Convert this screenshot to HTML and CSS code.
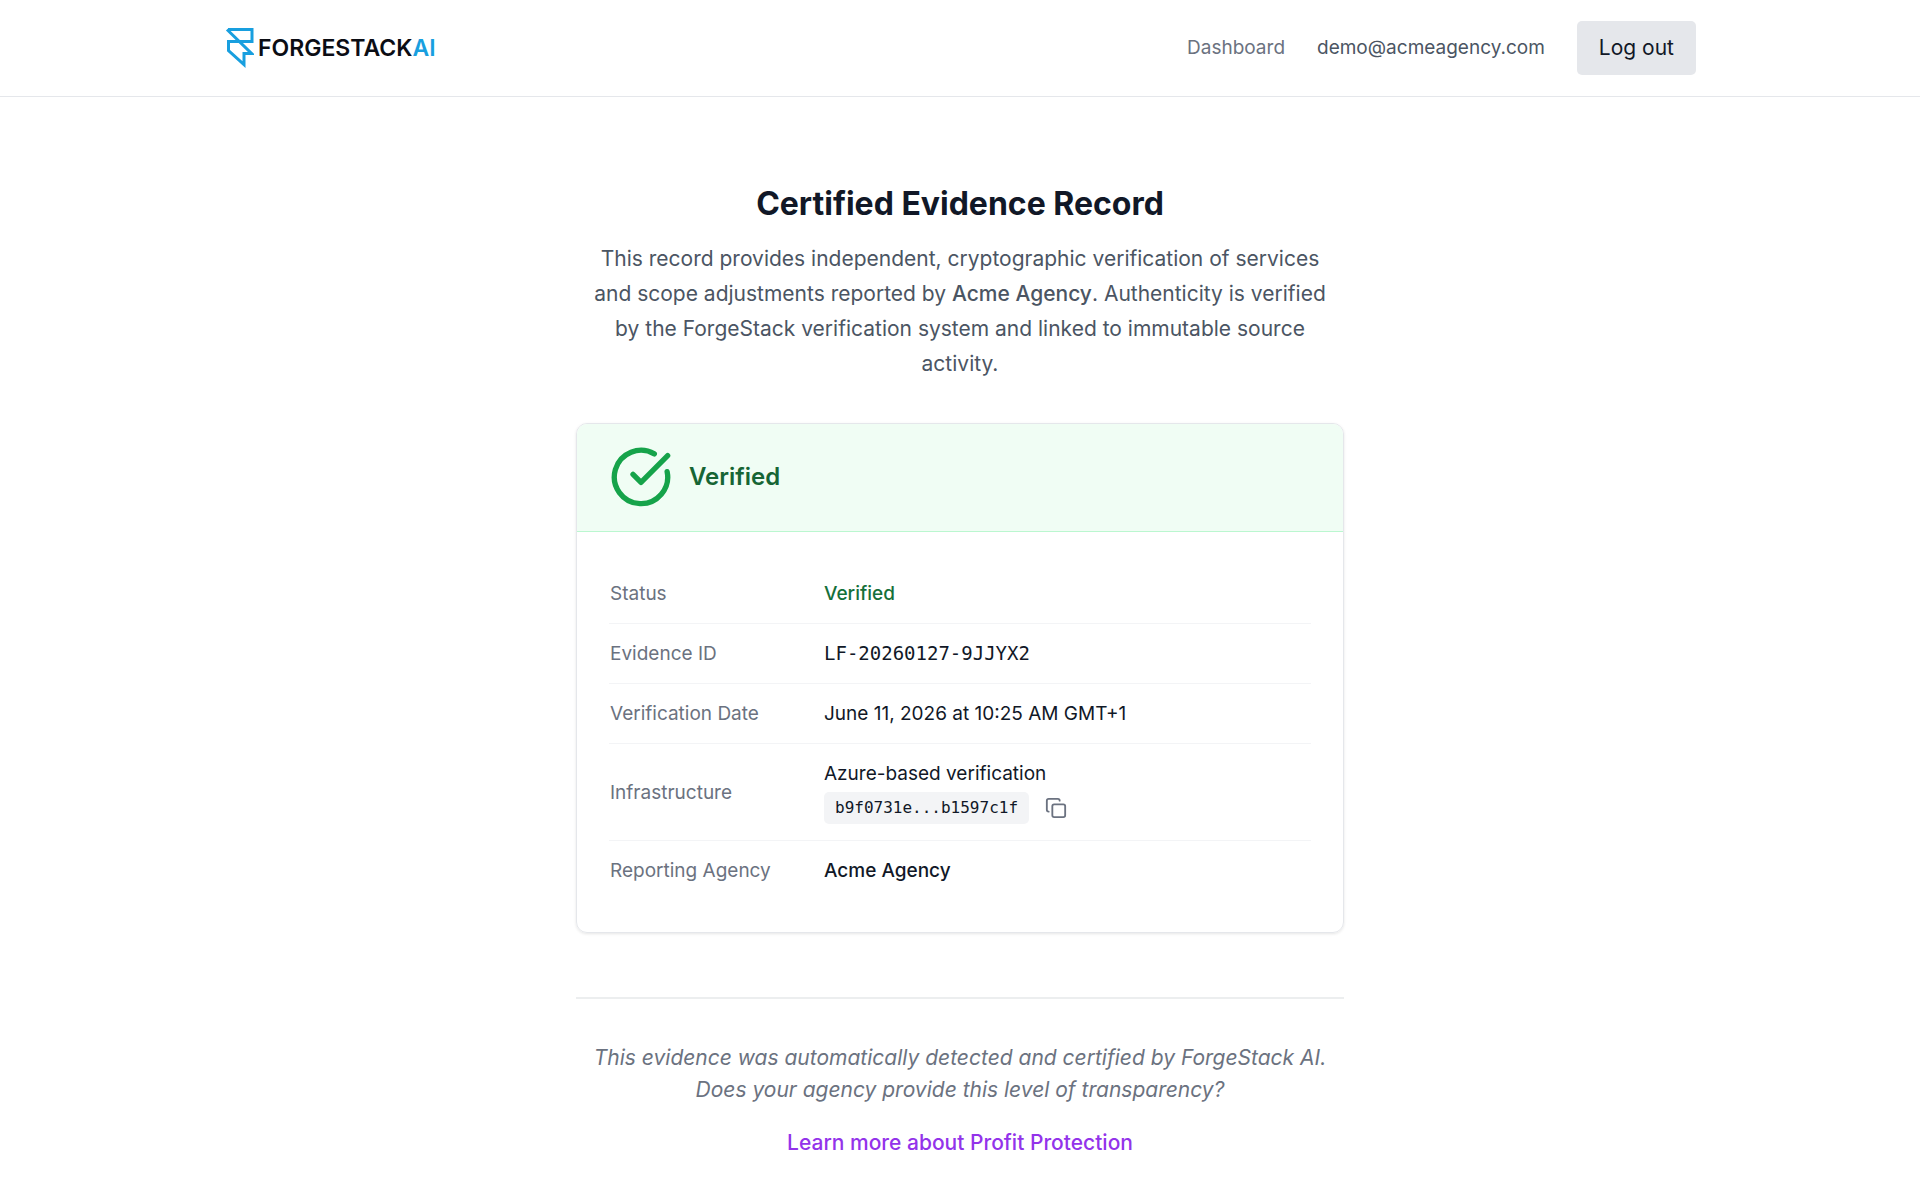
FILE: index.html
```html
<!DOCTYPE html>
<html lang="en">
<head>
    <meta charset="UTF-8">
    <meta name="viewport" content="width=device-width, initial-scale=1.0">
    <title>Certified Evidence Record - ForgeStack AI</title>
    <link rel="stylesheet" href="styles.css">
</head>
<body>
    <header class="site-header">
        <div class="header-inner">
            <a href="#" class="logo">
                <svg class="logo-mark" viewBox="0 0 30 40" fill="none" stroke="#189fdf" stroke-width="3">
                    <path d="M4 1.5H28V13.5H15.5M3 1.5L27.5 25.5H20V36.5L4.5 22.5V13.5H15"/>
                </svg>
                <span class="logo-text">FORGESTACK<span class="logo-ai">AI</span></span>
            </a>
            <nav class="nav">
                <a href="#" class="nav-link">Dashboard</a>
                <span class="nav-email">demo@acmeagency.com</span>
                <button type="button" class="logout">Log out</button>
            </nav>
        </div>
    </header>

    <main class="container">
        <h1>Certified Evidence Record</h1>
        <p class="intro">This record provides independent, cryptographic verification of services and scope adjustments reported by <strong>Acme Agency</strong>. Authenticity is verified by the ForgeStack verification system and linked to immutable source activity.</p>

        <section class="card">
            <div class="card-header">
                <svg class="check-icon" viewBox="0 0 24 24" fill="none" stroke="currentColor" stroke-width="2" stroke-linecap="round" stroke-linejoin="round">
                    <path d="M21.801 10A10 10 0 1 1 17 3.335"/>
                    <path d="m9 11 3 3L22 4"/>
                </svg>
                <h2>Verified</h2>
            </div>
            <div class="card-body">
                <table class="details">
                    <tr>
                        <th scope="row">Status</th>
                        <td class="verified">Verified</td>
                    </tr>
                    <tr>
                        <th scope="row">Evidence ID</th>
                        <td class="mono">LF-20260127-9JJYX2</td>
                    </tr>
                    <tr>
                        <th scope="row">Verification Date</th>
                        <td>June 11, 2026 at 10:25 AM GMT+1</td>
                    </tr>
                    <tr>
                        <th scope="row">Infrastructure</th>
                        <td>
                            <div>Azure-based verification</div>
                            <div class="hash">
                                <code>b9f0731e...b1597c1f</code>
                                <button type="button" class="copy" aria-label="Copy hash">
                                    <svg viewBox="0 0 24 24" fill="none" stroke="currentColor" stroke-width="2" stroke-linecap="round" stroke-linejoin="round">
                                        <rect x="8" y="8" width="14" height="14" rx="2"/>
                                        <path d="M4 16c-1.1 0-2-.9-2-2V4c0-1.1.9-2 2-2h10c1.1 0 2 .9 2 2"/>
                                    </svg>
                                </button>
                            </div>
                        </td>
                    </tr>
                    <tr>
                        <th scope="row">Reporting Agency</th>
                        <td class="agency">Acme Agency</td>
                    </tr>
                </table>
            </div>
        </section>

        <footer class="footer">
            <p>This evidence was automatically detected and certified by ForgeStack AI. Does your agency provide this level of transparency?</p>
            <a href="#" class="learn-more">Learn more about Profit Protection</a>
        </footer>
    </main>
</body>
</html>
```
FILE: styles.css
```css
* {
    box-sizing: border-box;
}
body {
    margin: 0;
    font-family: Inter, "Liberation Sans", sans-serif;
    font-size: 21px;
    line-height: 32px;
    color: #111827;
    background: #fff;
}
a {
    text-decoration: none;
}
h1, h2, p {
    margin: 0;
}

/* Header */
.site-header {
    border-bottom: 1px solid #e5e7eb;
}
.header-inner {
    display: flex;
    justify-content: space-between;
    align-items: center;
    max-width: 1536px;
    margin: 0 auto;
    padding: 21px 32px;
}
.logo {
    display: flex;
    align-items: center;
    gap: 4px;
    color: #0b0d14;
}
.logo-mark {
    width: 30px;
    height: 40px;
}
.logo-text {
    font-size: 23px;
    font-weight: 600;
}
.logo-ai {
    color: #189fdf;
}
.nav {
    display: flex;
    align-items: center;
    gap: 32px;
    font-size: 19px;
}
.nav-link {
    color: #6b7280;
}
.nav-email {
    color: #4b5563;
}
.logout {
    padding: 11px 22px;
    border: none;
    border-radius: 5px;
    background: #e5e7eb;
    color: #111827;
    font-family: inherit;
    font-size: 21px;
    line-height: 32px;
    cursor: pointer;
}

/* Page */
.container {
    max-width: 768px;
    margin: 0 auto;
    padding: 85px 0 40px;
}
h1 {
    font-size: 32px;
    line-height: 43px;
    font-weight: 700;
    text-align: center;
}
.intro {
    margin: 16px 0 42px;
    padding: 0 8px;
    line-height: 35px;
    text-align: center;
    color: #4b5563;
}
.intro strong {
    font-weight: 500;
}

/* Card */
.card {
    border: 1px solid #e5e7eb;
    border-radius: 11px;
    overflow: hidden;
    box-shadow: 0 1px 3px rgba(0, 0, 0, 0.1);
}
.card-header {
    display: flex;
    align-items: center;
    gap: 16px;
    padding: 21px 32px 22px;
    background: #f0fdf4;
    border-bottom: 1px solid #bbf7d0;
}
.check-icon {
    width: 64px;
    height: 64px;
    color: #16a34a;
}
h2 {
    font-size: 24px;
    font-weight: 600;
    color: #166534;
}
.card-body {
    padding: 32px;
}
.details {
    width: 100%;
    border-collapse: collapse;
    font-size: 19px;
    line-height: 27px;
}
.details tr + tr {
    border-top: 1px solid #f3f4f6;
}
.details th, .details td {
    padding: 16px 0;
    text-align: left;
}
.details th {
    width: 215px;
    padding-left: 1px;
    font-weight: 400;
    color: #6b7280;
}
.details .verified {
    font-weight: 500;
    color: #15703a;
}
.details .agency {
    font-weight: 500;
}
.mono, code {
    font-family: "DejaVu Sans Mono", monospace;
}
.hash {
    display: flex;
    align-items: center;
    gap: 16px;
    margin-top: 5px;
}
code {
    padding: 5px 11px;
    border-radius: 5px;
    background: #f3f4f6;
    font-size: 16px;
    line-height: 22px;
}
.copy {
    display: flex;
    padding: 0;
    border: none;
    background: none;
    color: #6b7280;
    cursor: pointer;
}
.copy svg {
    width: 22px;
    height: 22px;
}

/* Footer */
.footer {
    margin-top: 64px;
    padding-top: 43px;
    border-top: 2px solid #eceeef;
    text-align: center;
}
.footer p {
    margin-bottom: 21px;
    font-style: italic;
    color: #6b7280;
}
.learn-more {
    font-weight: 500;
    color: #9333ea;
}
```
